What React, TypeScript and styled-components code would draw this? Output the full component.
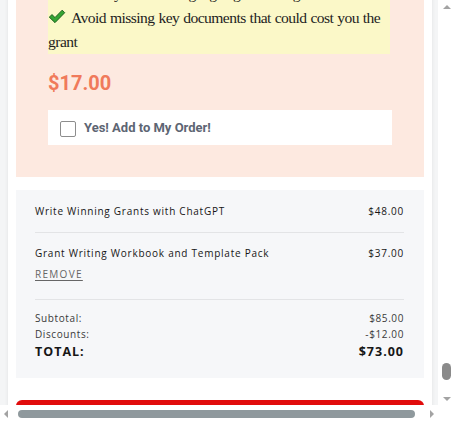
import React from "react";
import styled, { createGlobalStyle } from "styled-components";

const Global = createGlobalStyle`
  html, body { margin: 0; padding: 0; overflow: hidden; background: #fff; }
  #root { width: 455px; height: 422px; }
`;

const Frame = styled.div`
  display: grid;
  grid-template-columns: 438px 17px;
  grid-template-rows: 405px 17px;
  width: 455px;
  height: 422px;
  background: #fff;
`;

const Viewport = styled.div`
  overflow: hidden;
  background: #f4f5f6;
  padding: 0 6px 0 8px;
`;

const Card = styled.div`
  background: #fff;
  box-shadow: 0 0 4px rgba(0, 0, 0, 0.08);
  padding: 0 8px 40px;
  min-height: 100%;
  box-sizing: border-box;
  width: 424px;
`;

const Offer = styled.section`
  background: #fde9e0;
  padding: 0 32px 32px;
`;

const Benefits = styled.ul`
  list-style: none;
  margin: 0;
  padding: 0;
  background: #fbf8c8;
  width: 342px;
  font-family: "Liberation Serif", "Times New Roman", serif;
  font-size: 15.6px;
  letter-spacing: -0.55px;
  word-spacing: 0.5px;
  line-height: 24px;
  color: #1e1e1e;
  & > li:first-child { margin-top: -18px; }
`;

const Benefit = styled.li`
  margin: 0;
`;

const Tick = styled.svg`
  width: 18px;
  height: 15px;
  margin-right: 5px;
  vertical-align: -1px;
`;

const Price = styled.div`
  margin-top: 15px;
  font-family: Roboto, "Liberation Sans", sans-serif;
  font-weight: 700;
  font-size: 20px;
  line-height: 28px;
  color: #f07a5b;
`;

const AddBox = styled.label`
  margin-top: 13px;
  display: flex;
  align-items: center;
  gap: 8px;
  height: 35px;
  width: 344px;
  padding: 0 12px;
  box-sizing: border-box;
  background: #fff;
  font-family: Roboto, "Liberation Sans", sans-serif;
  font-weight: 700;
  font-size: 13px;
  color: #5d6573;
`;

const Box = styled.span`
  width: 14px;
  height: 14px;
  border: 1px solid #8d8d8d;
  border-radius: 2px;
  background: #fff;
  margin-top: 2px;
`;

const Summary = styled.section`
  margin-top: 13px;
  background: #f6f7f9;
  padding: 13px 20px 16px 19px;
  font-family: "Open Sans", "Liberation Sans", sans-serif;
  color: #1f1f1f;
`;

const Item = styled.div<{ $gap: number; $after: number }>`
  padding-bottom: ${(p) => p.$gap}px;
  border-bottom: 1px solid #e3e4e6;
  margin-bottom: ${(p) => p.$after}px;
`;

const Line = styled.div<{ $strong?: boolean; $light?: boolean }>`
  display: flex;
  justify-content: space-between;
  font-size: ${(p) => (p.$strong ? "12.5px" : "10px")};
  font-weight: ${(p) => (p.$strong ? 700 : p.$light ? 400 : 500)};
  letter-spacing: ${(p) => (p.$strong ? "1px" : p.$light ? "0.6px" : "0.75px")};
  line-height: ${(p) => (p.$strong ? "20px" : "16px")};
  color: ${(p) => (p.$light ? "#3a3a3a" : "#161616")};
`;

const Remove = styled.a`
  display: inline-block;
  margin-top: 4px;
  font-size: 10px;
  letter-spacing: 1.3px;
  line-height: 16px;
  color: #666;
  text-decoration: underline;
  text-underline-offset: 2px;
`;

const Checkout = styled.div`
  margin-top: 22px;
  height: 48px;
  background: #e10c0c;
  border-radius: 6px;
`;

const VTrack = styled.div`
  display: flex;
  flex-direction: column;
  align-items: center;
  justify-content: space-between;
  background: #fff;
  padding: 5px 0 4px;
  box-sizing: border-box;
`;

const HTrack = styled.div`
  display: flex;
  align-items: center;
  background: #fff;
  padding: 0 4px 0 4px;
`;

const Corner = styled.div`
  background: #fff;
`;

const Arrow = styled.span<{ $dir: "up" | "down" | "left" | "right" }>`
  width: 0;
  height: 0;
  border-style: solid;
  border-color: transparent;
  ${(p) =>
    p.$dir === "up"
      ? "border-width: 0 4px 4px 4px; border-bottom-color: #a3a3a3;"
      : p.$dir === "down"
      ? "border-width: 4px 4px 0 4px; border-top-color: #a3a3a3;"
      : p.$dir === "left"
      ? "border-width: 4px 4px 4px 0; border-right-color: #a3a3a3;"
      : "border-width: 4px 0 4px 4px; border-left-color: #a3a3a3;"}
`;

const VSpacer = styled.div`
  flex: 1;
  display: flex;
  flex-direction: column;
  justify-content: flex-end;
  align-items: center;
  padding-bottom: 17px;
`;

const VThumb = styled.div`
  width: 9px;
  height: 17px;
  border-radius: 5px;
  background: #8a8a8a;
`;

const HThumb = styled.div`
  flex: 1;
  height: 8px;
  border-radius: 4px;
  background: #8f999d;
  margin: 0 15px 0 10px;
`;

const CheckIcon = () => (
  <Tick viewBox="0 0 17 14">
    <path
      d="M1.2 7.6 L3.8 5.2 L6.6 8 L13.4 1 L15.8 3.4 L6.6 12.8 Z"
      fill="#34a534"
      stroke="#1d5e1d"
      strokeWidth="0.9"
      strokeLinejoin="round"
    />
  </Tick>
);

export default function App() {
  return (
    <>
      <Global />
      <Frame>
        <Viewport>
          <Card>
            <Offer>
              <Benefits>
                <Benefit>
                  <CheckIcon />
                  Revise your cost language again and again
                </Benefit>
                <Benefit>
                  <CheckIcon />
                  Avoid missing key documents that could cost you the grant
                </Benefit>
              </Benefits>
              <Price>$17.00</Price>
              <AddBox>
                <Box />
                Yes! Add to My Order!
              </AddBox>
            </Offer>
            <Summary>
              <Item $gap={13} $after={12}>
                <Line>
                  <span>Write Winning Grants with ChatGPT</span>
                  <span>$48.00</span>
                </Line>
              </Item>
              <Item $gap={16} $after={10}>
                <Line>
                  <span>Grant Writing Workbook and Template Pack</span>
                  <span>$37.00</span>
                </Line>
                <Remove>REMOVE</Remove>
              </Item>
              <div>
                <Line $light>
                  <span>Subtotal:</span>
                  <span>$85.00</span>
                </Line>
                <Line $light>
                  <span>Discounts:</span>
                  <span>-$12.00</span>
                </Line>
                <Line $strong>
                  <span>TOTAL:</span>
                  <span>$73.00</span>
                </Line>
              </div>
            </Summary>
            <Checkout />
          </Card>
        </Viewport>
        <VTrack>
          <Arrow $dir="up" />
          <VSpacer>
            <VThumb />
          </VSpacer>
          <Arrow $dir="down" />
        </VTrack>
        <HTrack>
          <Arrow $dir="left" />
          <HThumb />
          <Arrow $dir="right" />
        </HTrack>
        <Corner />
      </Frame>
    </>
  );
}
